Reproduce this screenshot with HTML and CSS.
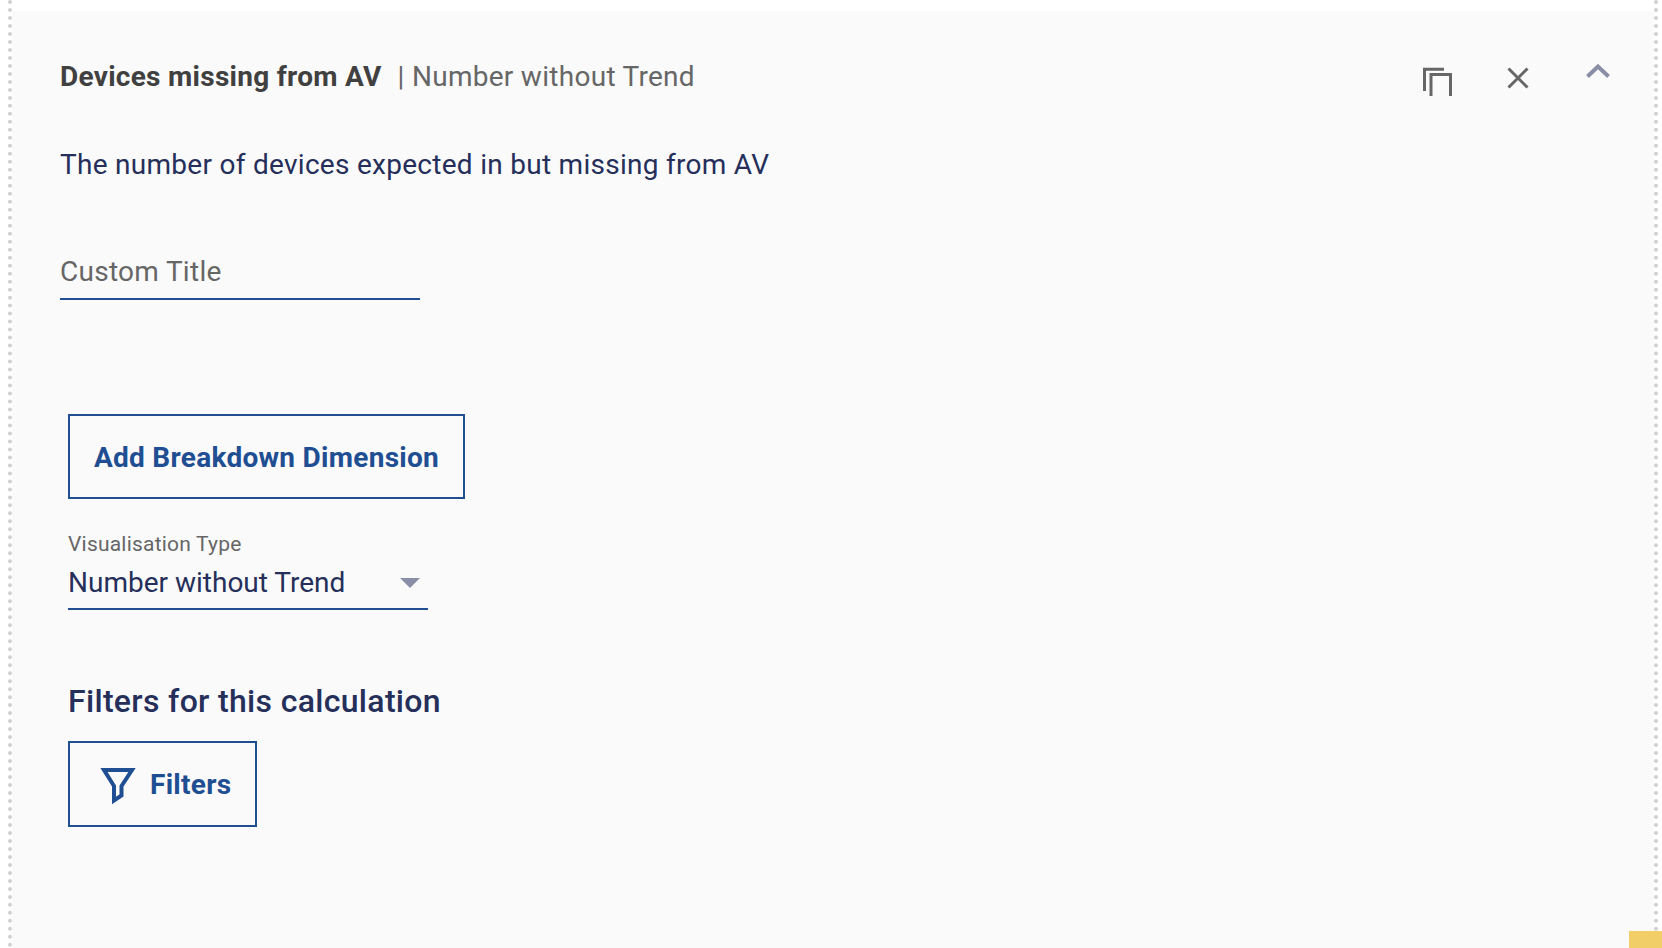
FILE: index.html
```html
<!DOCTYPE html>
<html lang="en">
<head>
<meta charset="utf-8">
<title>Devices missing from AV</title>
<link rel="stylesheet" href="styles.css">
</head>
<body>
<div class="frame">
  <section class="panel">
    <header class="head">
      <h2 class="title"><strong>Devices missing from AV</strong><span class="kind">| Number without Trend</span></h2>
      <div class="actions">
        <svg class="icon-copy" width="30" height="30" viewBox="0 0 30 30" fill="none" stroke="#666" stroke-width="3"><path d="M1.5 24V2.2H21"/><path d="M8 29V7.5H27.5V29"/></svg>
        <svg class="icon-close" width="22" height="22" viewBox="0 0 22 22" fill="none" stroke="#666" stroke-width="3"><path d="M1.5 1.5L20.5 20.5M20.5 1.5L1.5 20.5"/></svg>
        <svg class="icon-up" width="24" height="14" viewBox="0 0 24 14" fill="none" stroke="#8a8fa8" stroke-width="4"><path d="M1.5 12.5L12 2.5L22.5 12.5"/></svg>
      </div>
    </header>
    <p class="desc">The number of devices expected in but missing from AV</p>
    <div class="custom">Custom Title</div>
    <div class="body">
      <button class="btn btn-add"><span class="btn-text">Add Breakdown Dimension</span></button>
      <div class="select">
        <div class="select-label">Visualisation Type</div>
        <div class="select-row"><span>Number without Trend</span><i class="caret"></i></div>
      </div>
      <h3 class="filters-head">Filters for this calculation</h3>
      <button class="btn btn-filter">
        <svg width="36" height="42" viewBox="0 0 36 42" fill="none" stroke="#1f4e92" stroke-width="4"><path d="M4 7H32L21.5 23V32.5L14 37.5V23Z"/></svg>
        <span class="btn-text">Filters</span>
      </button>
    </div>
  </section>
</div>
<div class="tab"></div>
</body>
</html>
```
FILE: styles.css
```css
* { box-sizing: border-box; }
html, body { margin: 0; height: 100%; overflow: hidden; }
body { background: #fff; font-family: Roboto, sans-serif; position: relative; }
.frame {
  margin: 0 4px 0 8px;
  height: 948px;
  padding-top: 11px;
  border-left: 4px dotted #d0d0d4;
  border-right: 4px dotted #d0d0d4;
}
.panel { height: 937px; background: #fafafa; padding: 0 0 0 48px; }
.head { display: flex; justify-content: space-between; height: 65px; }
.title { margin: 47px 0 0; font-size: 28px; line-height: 38px; font-weight: 400; letter-spacing: .28px; white-space: nowrap; }
.title strong { color: #404040; font-weight: 700; }
.kind { color: #666; margin-left: 16px; }
.actions { position: relative; width: 300px; }
.actions svg { position: absolute; }
.icon-copy { left: 69px; top: 56px; }
.icon-close { left: 153px; top: 56px; }
.icon-up { left: 232px; top: 53px; }
.desc { margin: 71px 0 0; font-size: 28px; line-height: 36px; color: #252f5a; letter-spacing: .28px; }
.custom {
  margin-top: 71px; width: 360px; height: 46px;
  border-bottom: 2px solid #1f4e92; color: #666; font-size: 28px; line-height: 36px; letter-spacing: .28px;
}
.body { padding: 114px 0 0 8px; display: flex; flex-direction: column; align-items: flex-start; }
.btn {
  display: flex; align-items: center; background: transparent; border: 2px solid #1f4e92;
  color: #1f4e92; font: 700 28px/36px Roboto, sans-serif; letter-spacing: .28px; padding: 0;
}
.btn-text { padding-top: 2px; }
.btn-add { width: 397px; height: 85px; justify-content: center; }
.select { margin-top: 31px; width: 360px; border-bottom: 2px solid #1f4e92; height: 80px; }
.select-label { font-size: 21px; line-height: 28px; letter-spacing: .21px; color: #666; }
.select-row { margin-top: 7px; display: flex; justify-content: space-between; align-items: center; font-size: 28px; line-height: 36px; color: #252f5a; padding-right: 8px; }
.caret { width: 0; height: 0; border: 10px solid transparent; border-top: 10px solid #8a8fa8; border-bottom: 0; }
.filters-head { margin: 71px 0 0; font-size: 32px; line-height: 40px; font-weight: 500; letter-spacing: .32px; color: #252f5a; }
.btn-filter { margin-top: 20px; width: 189px; height: 86px; padding-left: 30px; gap: 14px; }
.tab { position: absolute; left: 1629px; top: 931px; width: 33px; height: 17px; background: #f1ce68; }
```
